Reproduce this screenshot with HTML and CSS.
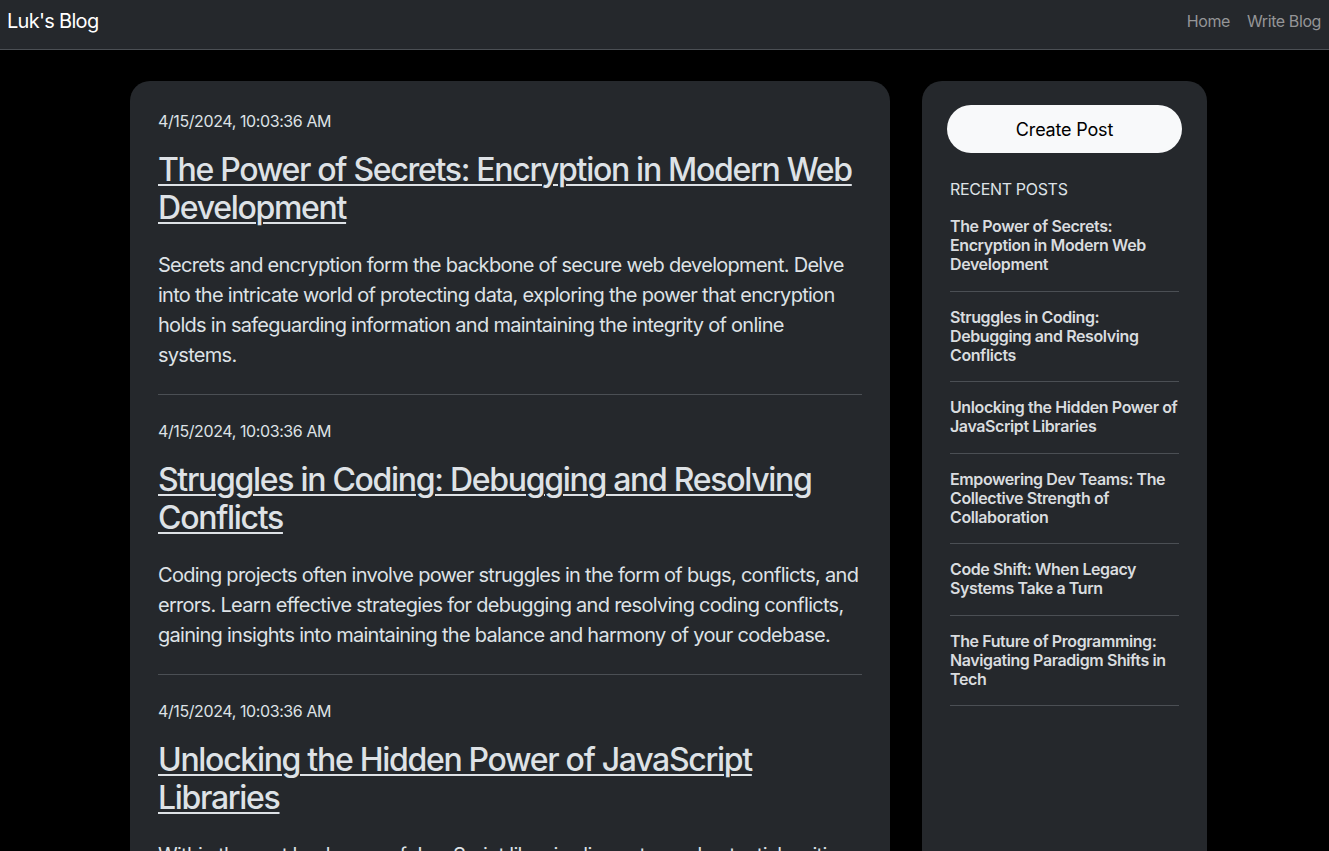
FILE: index.html
```html
<!DOCTYPE html>
<html lang="en">
<head>
<meta charset="utf-8">
<title>Luk's Blog</title>
<link rel="stylesheet" href="styles.css">
</head>
<body>
<nav class="navbar">
  <a class="brand" href="#">Luk's Blog</a>
  <div class="nav-links">
    <a href="#">Home</a>
    <a href="#">Write Blog</a>
  </div>
</nav>
<main class="layout">
  <section class="feed">
    <article class="post">
      <div class="post-date">4/15/2024, 10:03:36 AM</div>
      <h2 class="post-title"><a href="#">The Power of Secrets: Encryption in Modern Web Development</a></h2>
      <p class="post-summary">Secrets and encryption form the backbone of secure web development. Delve into the intricate world of protecting data, exploring the power that encryption holds in safeguarding information and maintaining the integrity of online systems.</p>
    </article>
    <article class="post">
      <div class="post-date">4/15/2024, 10:03:36 AM</div>
      <h2 class="post-title"><a href="#">Struggles in Coding: Debugging and Resolving Conflicts</a></h2>
      <p class="post-summary">Coding projects often involve power struggles in the form of bugs, conflicts, and errors. Learn effective strategies for debugging and resolving coding conflicts, gaining insights into maintaining the balance and harmony of your codebase.</p>
    </article>
    <article class="post">
      <div class="post-date">4/15/2024, 10:03:36 AM</div>
      <h2 class="post-title"><a href="#">Unlocking the Hidden Power of JavaScript Libraries</a></h2>
      <p class="post-summary">Within the vast landscape of JavaScript libraries lies untapped potential waiting to be discovered. Explore how the right libraries can empower your projects and accelerate development.</p>
    </article>
  </section>
  <aside class="sidebar">
    <button class="create-btn" type="button">Create Post</button>
    <h6 class="recent-heading">RECENT POSTS</h6>
    <ul class="recent-list">
      <li><a href="#">The Power of Secrets: Encryption in Modern Web Development</a></li>
      <li><a href="#">Struggles in Coding: Debugging and Resolving Conflicts</a></li>
      <li><a href="#">Unlocking the Hidden Power of JavaScript Libraries</a></li>
      <li><a href="#">Empowering Dev Teams: The Collective Strength of Collaboration</a></li>
      <li><a href="#">Code Shift: When Legacy Systems Take a Turn</a></li>
      <li><a href="#">The Future of Programming: Navigating Paradigm Shifts in Tech</a></li>
    </ul>
  </aside>
</main>
</body>
</html>
```
FILE: styles.css
```css
* { box-sizing: border-box; }
html, body { margin: 0; padding: 0; }
body {
  background: #000;
  color: #dee2e6;
  font-family: Inter, "Noto Sans", "Liberation Sans", sans-serif;
  font-size: 16px;
}
a { color: inherit; }

.navbar {
  height: 50px;
  background: #25282c;
  border-bottom: 1px solid #4b4f54;
  display: flex;
  align-items: center;
  justify-content: space-between;
  padding: 0 8px 8px 7px;
}
.brand {
  color: #fff;
  text-decoration: none;
  font-size: 20px;
  letter-spacing: -0.035em;
}
.nav-links { display: flex; gap: 17px; }
.nav-links a {
  color: #949597;
  text-decoration: none;
  font-size: 16px;
  letter-spacing: -0.025em;
}

.layout {
  display: flex;
  align-items: stretch;
  gap: 32px;
  padding: 31px 0 0 130px;
}
.feed {
  width: 760px;
  background: #25282c;
  border-radius: 20px;
  padding: 28px 28px 0;
}
.post { border-bottom: 1px solid #4b4f54; padding-bottom: 24px; margin-bottom: 24px; }
.post-date {
  font-size: 16px;
  line-height: 24px;
  letter-spacing: -0.025em;
  color: #dee2e6;
}
.post-title {
  margin: 18px 0 23px;
  font-size: 32px;
  font-weight: 500;
  line-height: 38px;
  letter-spacing: -1.3px;
  color: #dee2e6;
}
.post-title a { text-decoration: underline; text-underline-offset: 3px; text-decoration-thickness: 2px; }
.post-summary {
  margin: 0;
  font-size: 20px;
  line-height: 30px;
  letter-spacing: -0.72px;
  color: #dee2e6;
}

.sidebar {
  width: 285px;
  background: #25282c;
  border-radius: 20px;
  padding: 24px 25px;
}
.create-btn {
  display: block;
  width: 100%;
  height: 48px;
  border: 0;
  border-radius: 24px;
  background: #f8f9fa;
  color: #000;
  font-family: inherit;
  font-size: 18px;
  letter-spacing: -0.01em;
}
.recent-heading {
  margin: 27px 3px 2px;
  font-size: 16px;
  font-weight: 400;
  line-height: 19px;
  letter-spacing: -0.02em;
  color: #dee2e6;
}
.recent-list { list-style: none; margin: 0 3px; padding: 0; }
.recent-list li {
  padding: 16px 0;
  border-bottom: 1px solid #4b4f54;
  font-size: 16px;
  font-weight: 600;
  line-height: 19.2px;
  letter-spacing: -0.025em;
}
.recent-list a { text-decoration: none; color: #d9dcdf; }
```
